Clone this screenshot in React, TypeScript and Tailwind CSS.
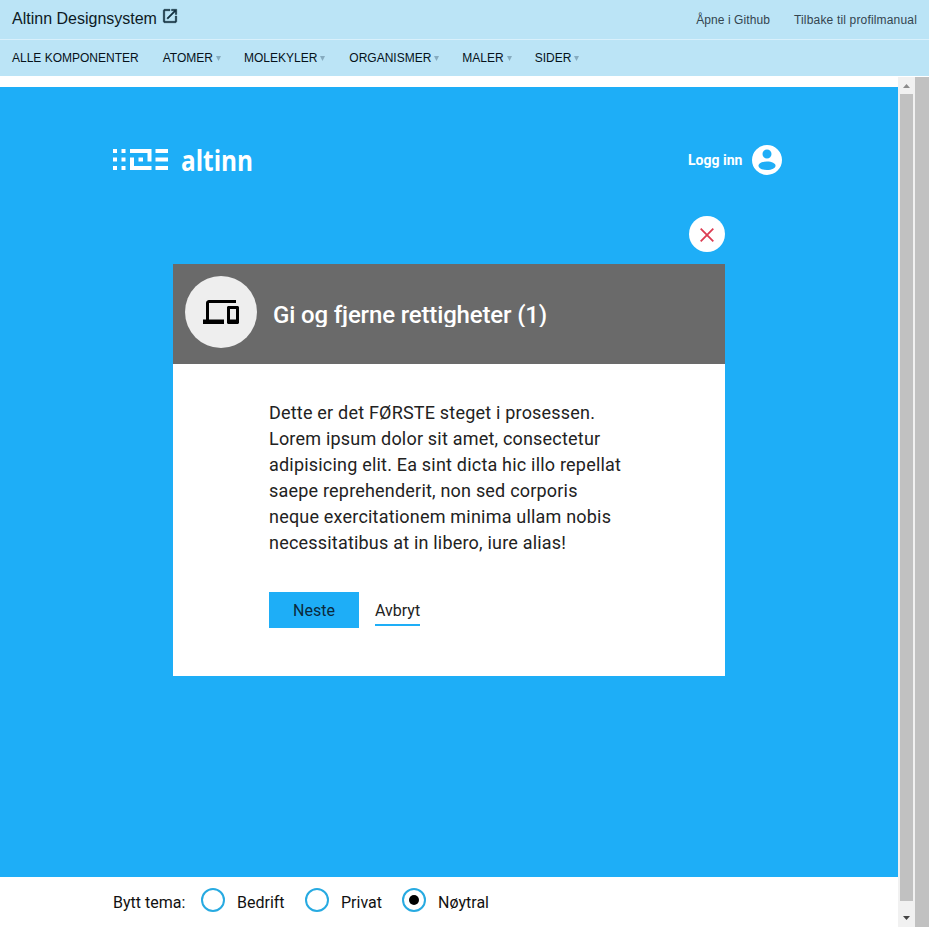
const menu = ['ATOMER', 'MOLEKYLER', 'ORGANISMER', 'MALER', 'SIDER'];
const menuMargins = ['ml-6', 'ml-[23px]', 'ml-[24px]', 'ml-[23px]', 'ml-[23px]'];

function Header() {
  return (
    <header className="h-[76px] shrink-0 bg-[#bbe4f6] font-['Liberation_Sans',Arial,sans-serif]">
      <div className="flex h-10 items-center justify-between border-b border-[#d9f0fb] px-3">
        <a className="flex items-center text-base text-[#0d1a24]">
          <span className="mt-[-2px] w-[145px] whitespace-nowrap">Altinn Designsystem</span>
          <svg className="mt-[-7px] ml-1 size-[18px]" viewBox="0 0 24 24" fill="#14303f" stroke="#14303f" strokeWidth=".5">
            <path d="M19 19H5V5h7V3H5c-1.11 0-2 .9-2 2v14c0 1.1.89 2 2 2h14c1.1 0 2-.9 2-2v-7h-2v7zM14 3v2h3.59l-9.83 9.83 1.41 1.41L19 6.41V10h2V3h-7z" />
          </svg>
        </a>
        <nav className="flex gap-6 text-xs whitespace-nowrap text-[#33454f]">
          <a className="tracking-[0.08px]">Åpne i Github</a>
          <a className="tracking-[0.17px]">Tilbake til profilmanual</a>
        </nav>
      </div>
      <nav className="flex h-9 items-center px-3 text-xs whitespace-nowrap text-[#06121a]">
        <a>ALLE KOMPONENTER</a>
        {menu.map((m, i) => (
          <a key={m} className={'flex items-center ' + menuMargins[i]}>
            {m}
            <svg className="mt-px ml-[3px] h-[5px] w-[5px]" viewBox="0 0 5 5" fill="#86abbf">
              <path d="M0 0h5L2.5 5z" />
            </svg>
          </a>
        ))}
      </nav>
    </header>
  );
}

function Logo() {
  return (
    <svg className="h-[30px] w-[141px] overflow-visible" viewBox="0 -2 141 30" fill="#fff">
      <path d="M0 1h4v4H0zM0 9.500h4v4H0zM0 18h4v4H0zM8.500 1h4v4h-4zM8.500 9.500h4v4h-4zM8.500 18h4v4h-4z" />
      <path d="M17 1h21.500v12.500h-4V5H17zM17 9.500h4V18h17.500v4H17zM25.500 9.500h4.500v4h-4.500z" />
      <path d="M42.500 1H55v4H42.500zM42.500 9.500H55v4H42.500zM42.500 18H55v4H42.500z" />
      <text x="68" y="22.500" fontSize="28" fontWeight="700" fontFamily="'Open Sans', sans-serif" textLength="72" lengthAdjust="spacingAndGlyphs">altinn</text>
    </svg>
  );
}

function Dialog() {
  return (
    <section className="ml-[173px] flex w-[552px] flex-col">
      <button className="mb-3 flex size-9 items-center justify-center self-end rounded-full bg-white">
        <svg className="mt-[2px] size-[14px]" viewBox="0 0 14 14" stroke="#dc3c52" strokeWidth="1.8">
          <path d="M.7.7l12.600 12.600M13.300.7L.7 13.300" />
        </svg>
      </button>
      <div className="flex h-[100px] items-start bg-[#6a6a6a] p-3">
        <div className="flex size-[72px] items-center justify-center rounded-full bg-[#eee]">
          <svg className="size-9" viewBox="0 0 24 24">
            <path d="M4 6h18V4H4c-1.100 0-2 .9-2 2v11H0v3h14v-3H4V6zm19 2h-6c-.55 0-1 .45-1 1v10c0 .55.45 1 1 1h6c.55 0 1-.45 1-1V9c0-.55-.45-1-1-1zm-1 9h-4v-7h4v7z" />
          </svg>
        </div>
        <h1 className="mt-[26px] ml-4 h-[25px] overflow-hidden text-2xl leading-[27px] font-medium tracking-[-0.15px] whitespace-nowrap text-white">
          Gi og fjerne rettigheter (1)
        </h1>
      </div>
      <div className="h-[312px] bg-white px-24 pt-9 text-[#222]">
        <p className="text-lg leading-[26px] tracking-[0.2px] whitespace-nowrap">
          Dette er det FØRSTE steget i prosessen.
          <br />
          Lorem ipsum dolor sit amet, consectetur
          <br />
          adipisicing elit. Ea sint dicta hic illo repellat
          <br />
          saepe reprehenderit, non sed corporis
          <br />
          neque exercitationem minima ullam nobis
          <br />
          necessitatibus at in libero, iure alias!
        </p>
        <div className="mt-9 flex gap-4 text-base">
          <button className="h-9 w-[90px] bg-[#1eaef7] pt-[2px] text-[#0b2a3c]">Neste</button>
          <button className="h-[34px] border-b-2 border-[#1eaef7] pt-[5px]">Avbryt</button>
        </div>
      </div>
    </section>
  );
}

function ThemeOption({ label, checked, className }: { label: string; checked?: boolean; className: string }) {
  return (
    <label className={'flex items-start ' + className}>
      <span className="mt-[11px] mr-3 flex size-6 shrink-0 items-center justify-center rounded-full border-2 border-[#27aae1]">
        {checked && <span className="size-[10px] rounded-full bg-black" />}
      </span>
      {label}
    </label>
  );
}

export default function App() {
  return (
    <div className="flex h-[927px] w-[929px] flex-col overflow-hidden bg-white font-[Roboto,sans-serif]">
      <Header />
      <div className="mt-px flex min-h-0 flex-1">
        <main className="flex w-[898px] flex-col pt-[10px]">
          <div className="h-[790px] bg-[#1eaef7]">
            <div className="flex h-[129px] items-start justify-between pt-[55px] pr-[116px] pl-[113px]">
              <div className="mt-1">
                <Logo />
              </div>
              <a className="flex items-center text-sm font-bold text-white">
                <span className="w-[54px] whitespace-nowrap">Logg inn</span>
                <svg className="-mr-[3px] ml-[7px] size-9" viewBox="0 0 24 24" fill="#fff">
                  <path fillRule="evenodd" d="M12 2a10 10 0 1 0 0 20a10 10 0 0 0 0-20zM12 5a3 3 0 1 1 0 6a3 3 0 0 1 0-6zM12 13c3.300 0 5.700 1.300 5.700 2.800S15.300 18.700 12 18.700s-5.700-1.400-5.700-2.900S8.700 13 12 13z" />
                </svg>
              </a>
            </div>
            <Dialog />
          </div>
          <div className="flex h-[50px] pl-[113px] text-base leading-[51px] whitespace-nowrap text-[#111]">
            <span className="w-[88px]">Bytt tema:</span>
            <ThemeOption label="Bedrift" className="w-[104px]" />
            <ThemeOption label="Privat" className="w-[97px]" />
            <ThemeOption label="Nøytral" checked className="" />
          </div>
        </main>
        <div className="flex w-[17px] flex-col items-center bg-[#f1f1f1]">
          <svg className="h-[17px] w-[17px]" viewBox="0 0 17 17" fill="#8c8c8c">
            <path d="M5 11h7L8.500 7z" />
          </svg>
          <div className="w-[13px] flex-1 bg-[#c1c1c1]" />
          <svg className="h-[26px] w-[17px]" viewBox="0 0 17 26" fill="#444">
            <path d="M5 15h7l-3.500 4z" />
          </svg>
        </div>
        <div className="flex-1 bg-[#c1c1c1]" />
      </div>
    </div>
  );
}
